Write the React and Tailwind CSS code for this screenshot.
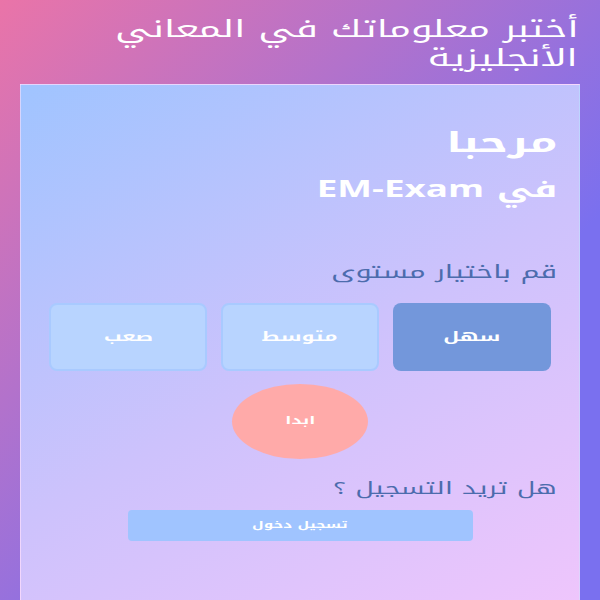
import React, { useState } from 'react';

const levels = [
  { id: 'easy', label: 'سهل' },
  { id: 'mid', label: 'متوسط' },
  { id: 'hard', label: 'صعب' },
];

// the design's glyphs are drawn wide, so text is stretched horizontally
const Wide = ({ children, center }) => (
  <span className={center ? 'inline-block origin-center scale-x-[1.6]' : 'inline-block origin-right scale-x-[1.6]'}>
    {children}
  </span>
);

export default function App() {
  const [level, setLevel] = useState('easy');

  return (
    <div
      dir="rtl"
      className="w-[600px] h-[600px] overflow-hidden bg-[linear-gradient(135deg,#ea74a8_0%,#7a70ef_68%)] font-['Noto_Kufi_Arabic','DejaVu_Sans',sans-serif]"
    >
      {/* header */}
      <h1 className="pr-[22px] pt-[15px] text-[24px] leading-[29px] text-white">
        <Wide>أختبر معلوماتك في المعاني</Wide>
        <br />
        <Wide>الأنجليزية</Wide>
      </h1>

      {/* card */}
      <div className="mx-[20px] mt-[11px] h-[560px] border border-white/30 bg-[linear-gradient(150deg,#a0c4ff_0%,#cdc2fc_50%,#f2c6fc_100%)] px-[22px]">
        <h2 className="mt-[38px] text-[28px] leading-[40px] font-bold text-white"><Wide>مرحبا</Wide></h2>
        <h3 className="mt-[10px] text-[23px] leading-[34px] font-bold text-white"><Wide>في EM-Exam</Wide></h3>

        <p className="mt-[51px] text-[18px] leading-[28px] text-[#4c6cad]"><Wide>قم باختيار مستوى</Wide></p>

        <div className="mt-[17px] grid grid-cols-3 gap-[14px] px-[6px]">
          {levels.map(l => (
            <button
              key={l.id}
              onClick={() => setLevel(l.id)}
              className={
                level === l.id
                  ? 'h-[68px] rounded-[8px] bg-[#7397db] text-[13px] font-bold text-white'
                  : 'h-[68px] rounded-[8px] border-2 border-[#a9caff] bg-[#b8d4ff] text-[13px] font-bold text-white'
              }
            >
              <Wide center>{l.label}</Wide>
            </button>
          ))}
        </div>

        <div className="mt-[13px] flex justify-center">
          <button className="h-[75px] w-[136px] rounded-[50%] bg-[#ffaaa9] text-[11px] font-bold text-white"><Wide center>ابدا</Wide></button>
        </div>

        <p className="mt-[14px] text-[17px] leading-[30px] text-[#4c6cad]"><Wide>هل تريد التسجيل ؟</Wide></p>

        <div className="mt-[7px] flex justify-center">
          <button className="h-[31px] w-[345px] rounded-[4px] bg-[#a0c4ff] text-[9.5px] font-bold text-white"><Wide center>تسجيل دخول</Wide></button>
        </div>
      </div>
    </div>
  );
}
